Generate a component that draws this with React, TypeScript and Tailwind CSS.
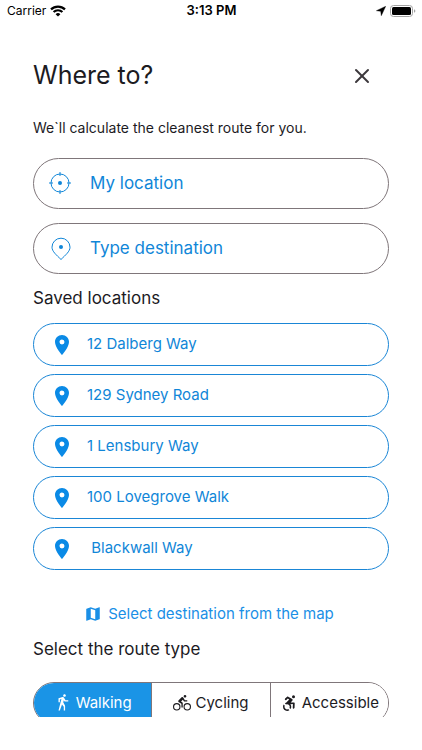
import { useState } from "react";
import { X } from "lucide-react";
import { MdMap, MdPlace } from "react-icons/md";
import { clsx } from "clsx";

const savedLocations = ["12 Dalberg Way", "129 Sydney Road", "1 Lensbury Way", "100 Lovegrove Walk", " Blackwall Way"];

const routeTypes = [
  {
    label: "Walking",
    path: "M14.12 10H19V8.2H15.38L13.38 4.87C13.08 4.37 12.54 4.03 11.92 4.03C11.74 4.03 11.58 4.06 11.42 4.11L6 5.8V11H7.8V7.33L9.91 6.67L6 22H7.8L10.67 13.89L13 17V22H14.8V15.59L12.31 11.05L13.04 8.18M14 3.8C15 3.8 15.8 3 15.8 2C15.8 1 15 .2 14 .2C13 .2 12.2 1 12.2 2C12.2 3 13 3.8 14 3.8Z",
  },
  {
    label: "Cycling",
    path: "M5 20.5A3.5 3.5 0 0 1 1.500 17A3.5 3.5 0 0 1 5 13.5A3.5 3.5 0 0 1 8.5 17A3.5 3.5 0 0 1 5 20.5M5 12A5 5 0 0 0 0 17A5 5 0 0 0 5 22A5 5 0 0 0 10 17A5 5 0 0 0 5 12M14.8 10H19V8.2H15.8L13.86 4.93C13.57 4.43 13 4.1 12.4 4.1C11.93 4.1 11.5 4.29 11.2 4.6L7.5 8.29C7.19 8.6 7 9 7 9.5C7 10.13 7.33 10.66 7.85 10.97L11.2 13V18H13V11.5L10.75 9.85L13.07 7.5M19 20.5A3.5 3.5 0 0 1 15.5 17A3.5 3.5 0 0 1 19 13.5A3.5 3.5 0 0 1 22.5 17A3.5 3.5 0 0 1 19 20.5M19 12A5 5 0 0 0 14 17A5 5 0 0 0 19 22A5 5 0 0 0 24 17A5 5 0 0 0 19 12M16 4.8C17 4.8 17.8 4 17.8 3C17.8 2 17 1.2 16 1.2C15 1.2 14.2 2 14.2 3C14.2 4 15 4.8 16 4.8Z",
  },
  {
    label: "Accessible",
    path: "M18.4 11.2L14.3 11.4L16.6 8.8C16.8 8.5 16.9 8 16.8 7.5C16.7 7.2 16.6 6.9 16.3 6.7L10.9 3.5C10.5 3.2 9.9 3.3 9.5 3.6L6.8 6.1C6.3 6.6 6.2 7.3 6.7 7.8C7.1 8.3 7.9 8.3 8.4 7.9L10.4 6.1L12.3 7.2L8.1 11.5C8 11.6 8 11.7 7.9 11.7C7.4 11.9 6.9 12.1 6.5 12.4L8 13.9C8.5 13.7 9 13.5 9.5 13.5C11.4 13.5 13 15.1 13 17C13 17.6 12.9 18.1 12.6 18.5L14.1 20C14.7 19.1 15 18.1 15 17C15 15.8 14.6 14.6 13.9 13.7L17.2 13.4L17 18.2C16.9 18.9 17.4 19.4 18.1 19.5H18.2C18.8 19.5 19.3 19 19.4 18.4L19.6 12.5C19.6 12.2 19.5 11.8 19.3 11.6C19 11.3 18.7 11.2 18.4 11.2M18 5.5A2 2 0 0 0 20 3.5A2 2 0 0 0 18 1.5A2 2 0 0 0 16 3.5A2 2 0 0 0 18 5.5M12.5 21.6C11.6 22.2 10.6 22.5 9.5 22.5C6.4 22.5 4 20.1 4 17C4 15.9 4.3 14.9 4.9 14L6.4 15.5C6.2 16 6 16.5 6 17C6 18.9 7.6 20.5 9.5 20.5C10.1 20.5 10.6 20.4 11 20.1L12.5 21.6Z",
  },
];

const WifiIcon = () => (
  <svg viewBox="0 0 16 12" className="h-3 w-4" fill="none" stroke="black" strokeWidth="2.2">
    <path d="M1 4.4a10 10 0 0 1 14 0" />
    <path d="M3.6 7.1a6.2 6.2 0 0 1 8.8 0" />
    <path d="M8 11.6 5.6 9.2a3.4 3.4 0 0 1 4.800 0Z" fill="black" stroke="none" />
  </svg>
);

const BatteryIcon = () => (
  <svg viewBox="0 0 26 12" className="h-3 w-[26px]">
    <rect x="0.5" y="0.5" width="22" height="11" rx="3" fill="none" stroke="#a3a3a3" />
    <rect x="2" y="2" width="19" height="8" rx="1.5" fill="black" />
    <path d="M24 4.2v3.6q1.4-.6 1.4-1.8T24 4.2Z" fill="#a3a3a3" />
  </svg>
);

const ArrowIcon = () => (
  <svg viewBox="0 0 10 10" className="size-2.5">
    <path d="M9.700.3.4 4.700l4.300.6.600 4.400Z" fill="black" stroke="black" strokeWidth="0.4" strokeLinejoin="round" />
  </svg>
);

const TargetIcon = () => (
  <svg viewBox="0 0 24 24" className="size-6 shrink-0" fill="none" stroke="#1086d8" strokeWidth="1">
    <circle cx="12" cy="11" r="9" />
    <path d="M12 0v4M12 18v4M1 11h4M19 11h4" />
    <circle cx="12" cy="11" r="2" fill="#1086d8" stroke="none" />
  </svg>
);

const PinIcon = () => (
  <svg viewBox="0 0 24 24" className="size-6 shrink-0" fill="none" stroke="#1086d8" strokeWidth="1">
    <path d="M13 22.500C8.500 18 4 14.500 4 10.200a9 9 0 0 1 18 0c0 4.300-4.500 7.800-9 12.300Z" />
    <circle cx="13" cy="10" r="2" fill="#1086d8" stroke="none" />
  </svg>
);

const App = () => {
  const [routeType, setRouteType] = useState("Walking");

  return (
    <div className="flex h-screen flex-col bg-white pb-[33px] font-['Inter',sans-serif] text-[#1c1b1f]">
      <header className="grid h-[22px] shrink-0 grid-cols-3 items-center pr-1.5 pl-[7px] text-black">
        <div className="flex items-center gap-1 text-xs">
          Carrier <WifiIcon />
        </div>
        <span className="text-center text-[13px] font-semibold">3:13 PM</span>
        <div className="flex items-center justify-end gap-1">
          <ArrowIcon />
          <BatteryIcon />
        </div>
      </header>

      <main className="min-h-0 flex-1 overflow-hidden px-[33px] pt-9">
        <div className="flex h-9 items-center justify-between pr-[15px]">
          <h1 className="text-[25px]">Where to?</h1>
          <button type="button" aria-label="Close" className="text-[#3c383c]">
            <X className="size-6" strokeWidth={2} />
          </button>
        </div>
        <p className="mt-6 text-sm leading-5">We`ll calculate the cleanest route for you.</p>

        <form className="mt-5 flex flex-col gap-3.5">
          <label className="flex h-[51px] items-center gap-[18px] rounded-full border border-[#7f767a] pr-5 pl-3.5">
            <TargetIcon />
            <input
              aria-label="Start"
              placeholder="My location"
              className="min-w-0 flex-1 text-[17px] outline-none placeholder:text-[#1086d8]"
            />
          </label>
          <label className="flex h-[51px] items-center gap-[18px] rounded-full border border-[#7f767a] pr-5 pl-3.5">
            <PinIcon />
            <input
              aria-label="Destination"
              placeholder="Type destination"
              className="min-w-0 flex-1 text-[17px] outline-none placeholder:text-[#1086d8]"
            />
          </label>
        </form>

        <h2 className="mt-3 text-[17px] leading-6">Saved locations</h2>
        <ul className="mt-[13px] flex flex-col gap-2">
          {savedLocations.map((location) => (
            <li key={location}>
              <button
                type="button"
                className="flex h-[43px] w-full items-center gap-[13px] rounded-full border border-[#1a86d6] pl-4 text-[15px] whitespace-pre text-[#1086d8]"
              >
                <MdPlace className="size-6 text-[#0a8ae6]" />
                {location}
              </button>
            </li>
          ))}
        </ul>

        <button type="button" className="mx-auto mt-8 flex h-6 items-center gap-1.5 pr-1 text-[15px] text-[#1a8fe6]">
          <MdMap className="size-[18px]" />
          Select destination from the map
        </button>

        <h2 className="mt-[11px] text-[17px] leading-6">Select the route type</h2>
        <div className="mt-[21px] flex h-[42px] overflow-hidden rounded-full border border-[#7f767a]">
          {routeTypes.map(({ label, path }) => (
            <button
              key={label}
              type="button"
              aria-pressed={routeType === label}
              onClick={() => setRouteType(label)}
              className={clsx(
                "flex flex-1 items-center justify-center gap-1 border-r border-[#7f767a] text-[15px] last:border-r-0",
                routeType === label ? "bg-[#1a94e6] text-white" : "bg-white"
              )}
            >
              <svg viewBox="0 0 24 24" className="size-[18px] shrink-0" fill="currentColor">
                <path d={path} />
              </svg>
              {label}
            </button>
          ))}
        </div>
      </main>
    </div>
  );
};

export default App;
